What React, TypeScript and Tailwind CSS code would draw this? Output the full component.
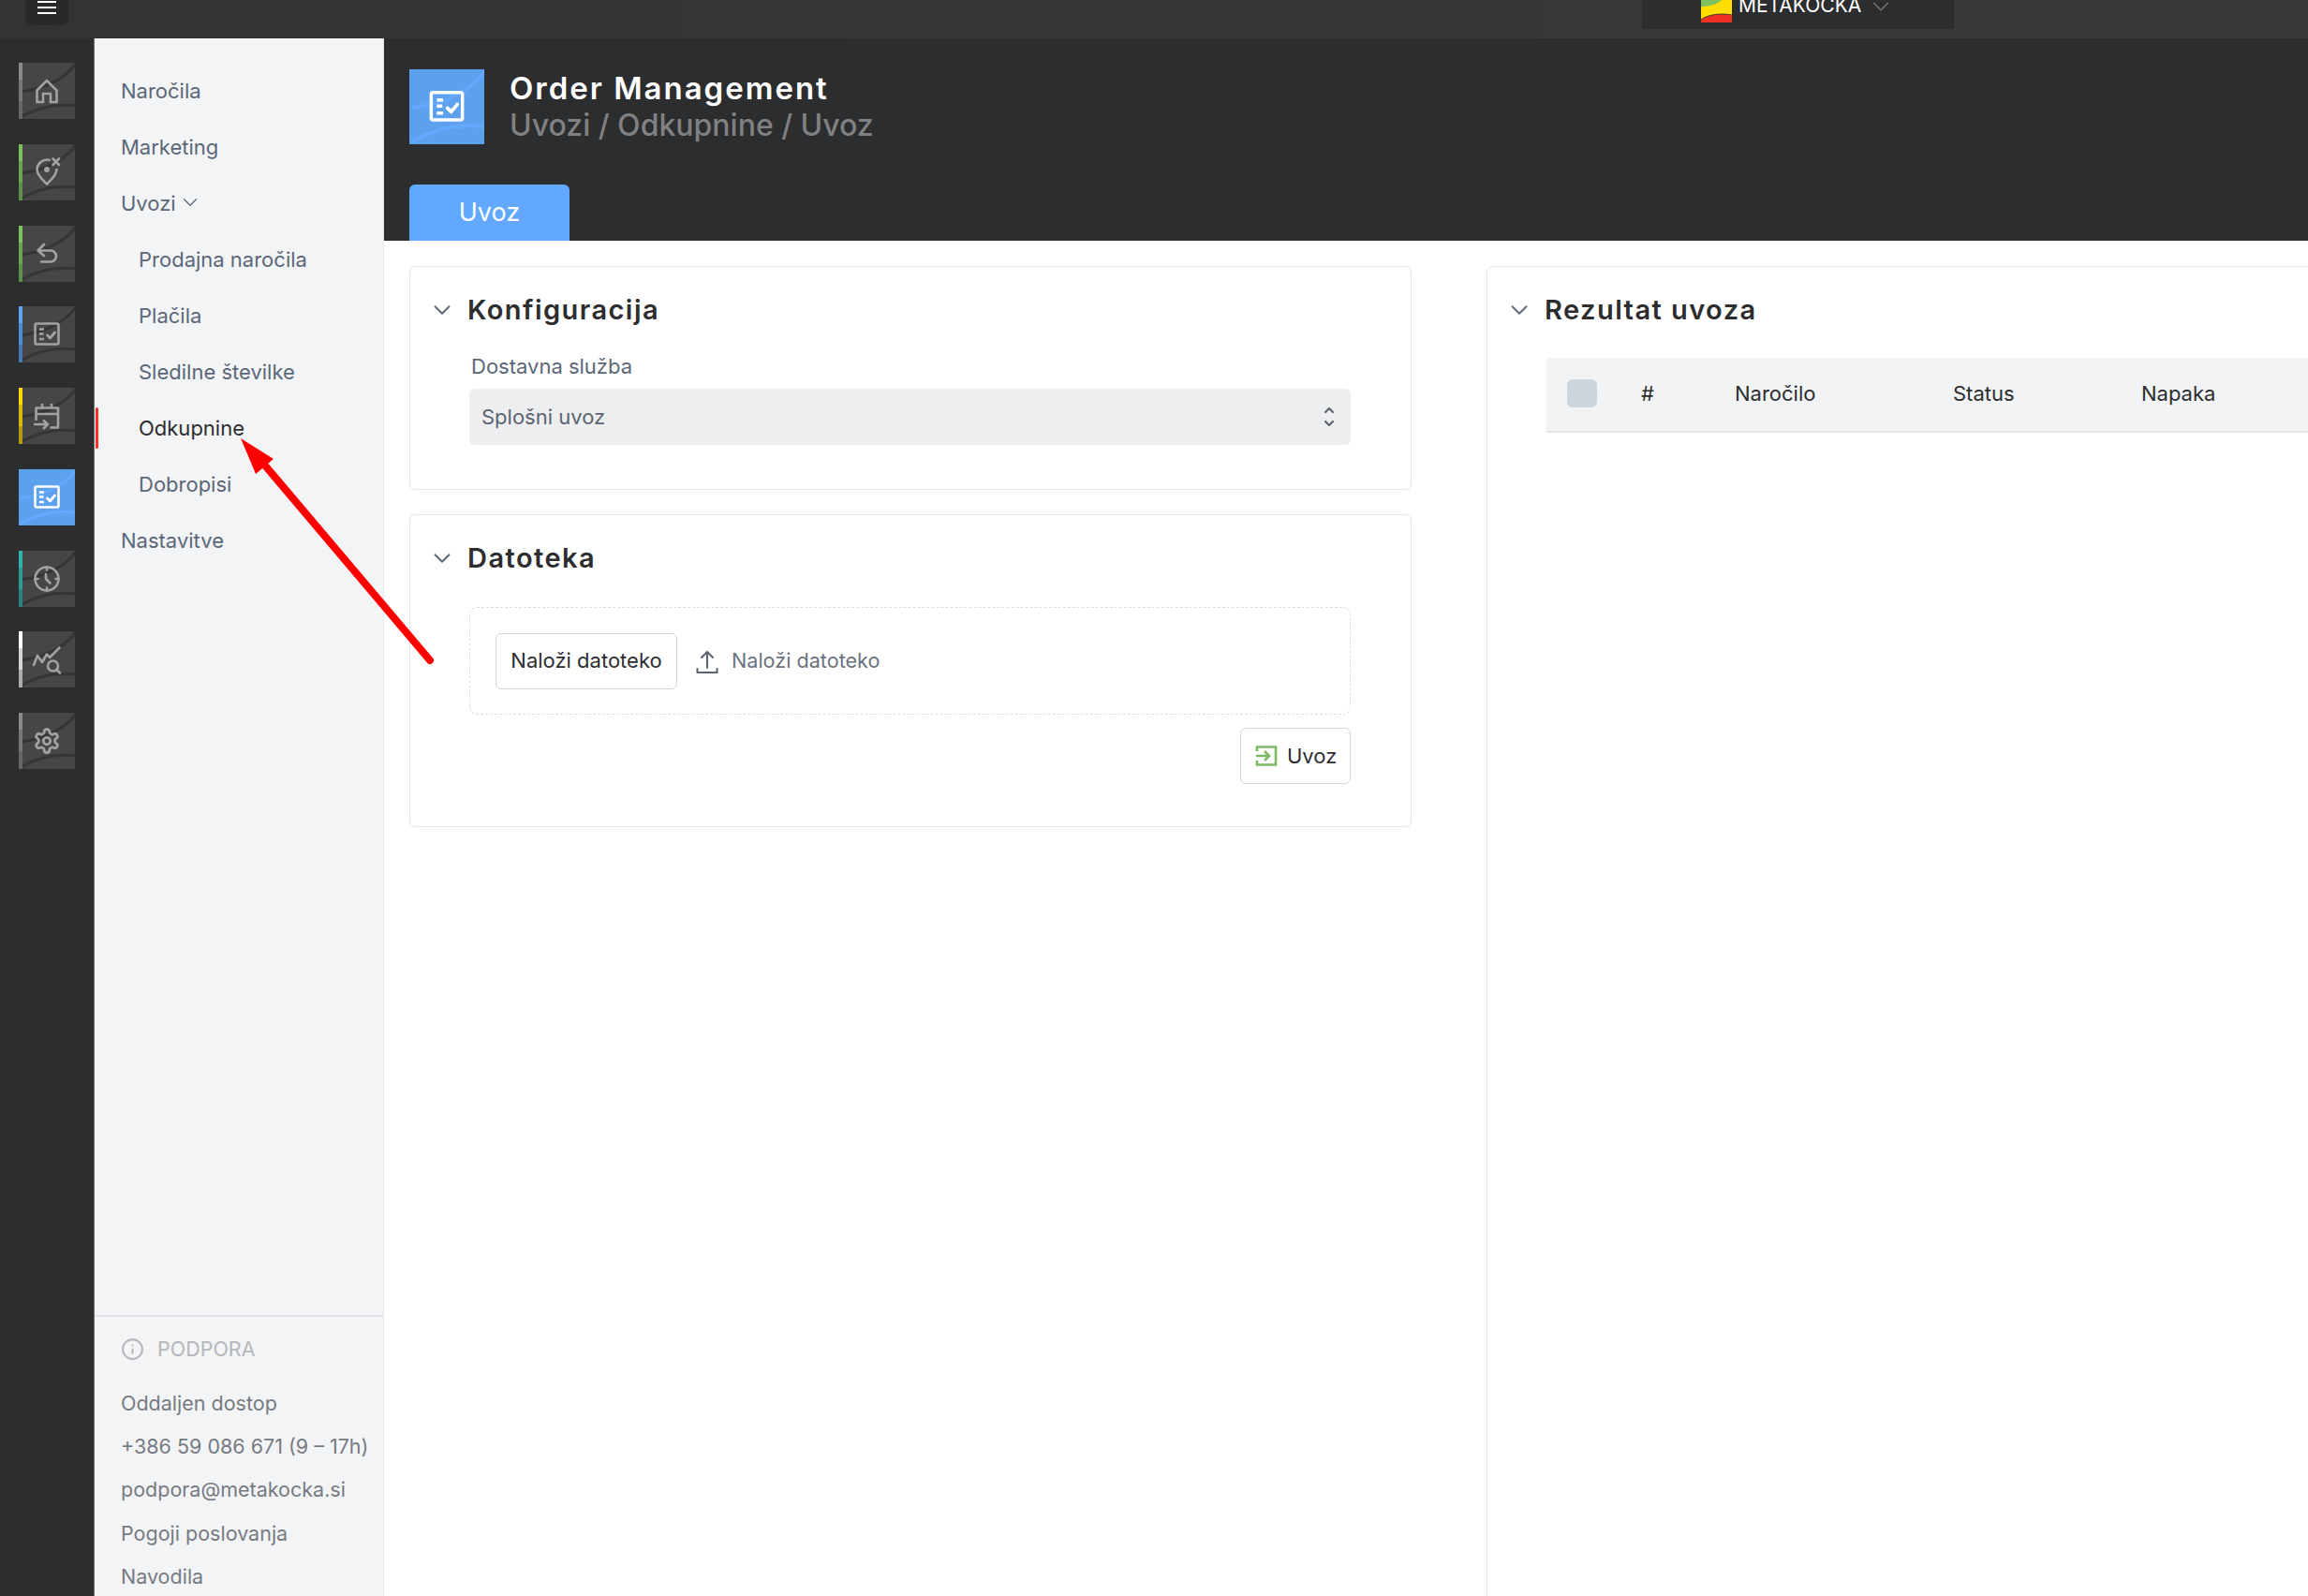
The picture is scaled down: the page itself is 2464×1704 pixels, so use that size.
import type { ReactNode } from "react";
import { ChevronDown, Info } from "lucide-react";

const navItems = [
  { label: "Naročila" },
  { label: "Marketing" },
  { label: "Uvozi", open: true },
  { label: "Prodajna naročila", sub: true },
  { label: "Plačila", sub: true },
  { label: "Sledilne številke", sub: true },
  { label: "Odkupnine", sub: true, active: true },
  { label: "Dobropisi", sub: true },
  { label: "Nastavitve" },
];

const supportLinks = [
  { label: "Oddaljen dostop", className: "h-[46px]" },
  { label: "+386 59 086 671 (9 – 17h)", className: "h-[46px]" },
  { label: "podpora@metakocka.si", className: "h-[47px]" },
  { label: "Pogoji poslovanja", className: "h-[46px]" },
  { label: "Navodila", className: "h-[46px]" },
];

function Tile({ strip, active, className, children }: { strip?: string[]; active?: boolean; className?: string; children: ReactNode }) {
  return (
    <svg viewBox="0 0 60 60" className={className ?? "w-[60px] h-[60px] shrink-0"}>
      <rect width="60" height="60" fill={active ? "#5ca0ee" : "#464646"} />
      <g fill="none" stroke={active ? "#64a9fd" : "#343536"} strokeWidth="3">
        <path d="M2 31 C 25 28, 47 20, 61 1" />
        <path d="M2 58 C 18 49, 38 43, 61 46" />
      </g>
      {strip && (
        <>
          <rect width="4" height="18" fill={strip[0]} />
          <rect y="18" width="4" height="23" fill={strip[1]} />
          <rect y="41" width="4" height="19" fill={strip[2]} />
        </>
      )}
      <g
        fill="none"
        stroke={active ? "#ffffff" : "#a2a2a2"}
        strokeWidth="2.6"
        strokeLinecap="round"
        strokeLinejoin="round"
      >
        {children}
      </g>
    </svg>
  );
}

function ChecklistGlyph() {
  return (
    <>
      <rect x="17.5" y="18.5" width="25" height="22" rx="1.5" />
      <path d="M22 24.5h5M22 29.5h4.5M22 35h5" strokeLinecap="butt" />
      <path d="M30.5 31l3 3 5-6" strokeWidth="2.8" />
    </>
  );
}

const railTiles = [
  {
    strip: ["#8b8b8b", "#777777", "#666666"],
    glyph: <path d="M19.5 29.5 30 19l10.5 10.5V42H34V33h-8v9h-6.5z" strokeLinecap="butt" strokeLinejoin="miter" />,
  },
  {
    strip: ["#7cc05f", "#6aa552", "#5c8f49"],
    glyph: (
      <>
        <path d="M32.5 16.7A11 11 0 0 0 19.5 27c0 6 6 11 10.5 15.5C34.5 38 40.5 33 40.5 27" />
        <circle cx="30" cy="27" r="1.6" fill="#a2a2a2" />
        <path d="M36.5 15.5l6.5 6.5M43 15.5 36.5 22" />
      </>
    ),
  },
  {
    strip: ["#7cc05f", "#6aa552", "#5c8f49"],
    glyph: <path d="M27 20l-6.5 6.5L27 32M20.5 26.5H34a6 6 0 0 1 0 12H24" />,
  },
  {
    strip: ["#5ea3f5", "#4f8cd6", "#4676b3"],
    glyph: <ChecklistGlyph />,
  },
  {
    strip: ["#ffd900", "#d9b90a", "#b39a0e"],
    glyph: (
      <path d="M18.5 35V21.5h23.5V42.5H33.5M18.5 28h23.5M25 17v5M35 17v5M16 39h14M26 34.5 31 39l-5 5" strokeLinecap="butt" />
    ),
  },
  { active: true, glyph: <ChecklistGlyph /> },
  {
    strip: ["#30b3ab", "#2d9a94", "#2b827e"],
    glyph: (
      <>
        <circle cx="30" cy="30" r="12.5" />
        <path d="M29 25v5l4.5 4.5M30 17.5v3M30 39.5v3M17.5 30h3M39.5 30h3" />
      </>
    ),
  },
  {
    strip: ["#ffffff", "#d5d5d5", "#acacac"],
    glyph: (
      <>
        <path d="M16 36l4-10 5 7 5-8.5 3 3.5 10.5-10.5" />
        <circle cx="36.5" cy="37" r="5.5" />
        <path d="M40.5 41l3.5 3.5" />
      </>
    ),
  },
  {
    strip: ["#8b8b8b", "#777777", "#666666"],
    glyph: (
      <g transform="translate(15 15) scale(1.25)" strokeWidth="2.2">
        <path d="M12.22 2h-.44a2 2 0 0 0-2 2v.18a2 2 0 0 1-1 1.73l-.43.25a2 2 0 0 1-2 0l-.15-.08a2 2 0 0 0-2.73.73l-.22.38a2 2 0 0 0 .73 2.73l.15.1a2 2 0 0 1 1 1.72v.51a2 2 0 0 1-1 1.74l-.15.09a2 2 0 0 0-.73 2.73l.22.38a2 2 0 0 0 2.73.73l.15-.08a2 2 0 0 1 2 0l.43.25a2 2 0 0 1 1 1.73V20a2 2 0 0 0 2 2h.44a2 2 0 0 0 2-2v-.18a2 2 0 0 1 1-1.73l.43-.25a2 2 0 0 1 2 0l.15.08a2 2 0 0 0 2.73-.73l.22-.39a2 2 0 0 0-.73-2.73l-.15-.08a2 2 0 0 1-1-1.74v-.5a2 2 0 0 1 1-1.74l.15-.09a2 2 0 0 0 .73-2.73l-.22-.38a2 2 0 0 0-2.73-.73l-.15.08a2 2 0 0 1-2 0l-.43-.25a2 2 0 0 1-1-1.73V4a2 2 0 0 0-2-2z" />
        <circle cx="12" cy="12" r="3" />
      </g>
    ),
  },
];

function TopBar() {
  return (
    <header className="h-[41px] shrink-0 flex bg-gradient-to-r from-[#323335] to-[#38393b] overflow-hidden">
      <div className="ml-[27px] w-[46px] h-[27px] rounded-b-lg bg-[#28292b] flex flex-col items-center gap-[4px] pt-[1px]">
        <span className="w-[20px] h-[2px] bg-white" />
        <span className="w-[20px] h-[2px] bg-white" />
        <span className="w-[20px] h-[2px] bg-white" />
      </div>
      <div className="ml-[1680px] w-[333px] h-[31px] bg-[#2c2d2f] flex items-start pl-[63px]">
        <svg viewBox="0 0 33 24" className="w-[33px] h-[24px]">
          <rect width="33" height="24" fill="#ffdd00" />
          <path d="M0 7C10 7 18 4 22 0H0z" fill="#7cc05f" />
          <path d="M0 24v-3c8-6 22-7 33-5v8z" fill="#f03024" />
          <path d="M0 21c8-6 22-7 33-5" fill="none" stroke="#3a3a2a" strokeWidth="1" />
        </svg>
        <span className="ml-[7px] -mt-[7px] h-[25px] leading-[25px] text-[21px] text-white">METAKOČKA</span>
        <ChevronDown className="ml-[6px] -mt-[8px] w-[30px] h-[30px] text-[#77787a]" strokeWidth={1.2} />
      </div>
    </header>
  );
}

function Rail() {
  return (
    <aside className="w-[101px] shrink-0 bg-[#2c2d2f] border-r border-[#6b6c6e] flex flex-col gap-[26.75px] pl-[20px] pt-[26px]">
      {railTiles.map((t, i) => (
        <Tile key={i} strip={t.strip} active={t.active}>
          {t.glyph}
        </Tile>
      ))}
    </aside>
  );
}

function Sidebar() {
  return (
    <aside className="w-[309px] shrink-0 bg-[#f3f4f6] border-r border-[#e5e7eb] flex flex-col text-[22px]">
      <nav className="pt-[26px] flex-1">
        {navItems.map((item) => (
          <div
            key={item.label}
            className={
              "relative h-[60px] flex items-center " +
              (item.sub ? "pl-[47px] " : "pl-[28px] ") +
              (item.active ? "text-[#2c2d2f]" : "text-[#5b6778]")
            }
          >
            {item.active && <span className="absolute left-[1px] top-[8px] w-[3px] h-[44px] rounded-sm bg-[#f5302a]" />}
            {item.label}
            {item.open && <ChevronDown className="ml-[2px] w-[26px] h-[26px] -mt-[2px]" strokeWidth={1.2} />}
          </div>
        ))}
      </nav>
      <div className="h-[300px] shrink-0 border-t-2 border-[#dfe1e5] ml-[1px] pl-[27px] text-[21.5px] text-[#767b82]">
        <div className="h-[69px] flex items-center text-[#b5b7ba]">
          <Info className="w-[25px] h-[25px]" strokeWidth={2} />
          <span className="ml-[14px]">PODPORA</span>
        </div>
        {supportLinks.map((l) => (
          <div key={l.label} className={"flex items-center whitespace-nowrap " + l.className}>
            {l.label}
          </div>
        ))}
      </div>
    </aside>
  );
}

function Card({ title, className, children }: { title: string; className?: string; children?: ReactNode }) {
  return (
    <section className={"rounded-md border border-[#e6e7ea] bg-white " + (className ?? "")}>
      <div className="h-[91px] flex items-center pl-[19px]">
        <ChevronDown className="w-[30px] h-[30px] text-[#5b6778]" strokeWidth={1.5} />
        <h2 className="ml-[12px] text-[29px] text-[#2c2d2f] font-semibold tracking-[0.05em]">{title}</h2>
      </div>
      <div className="pl-[63px] pr-[64px]">{children}</div>
    </section>
  );
}

function OutlineButton({ className, children }: { className?: string; children: ReactNode }) {
  return (
    <button className={"h-[60px] flex items-center rounded-md border border-[#d3d5d9] bg-white text-[22px] text-[#2c2d2f] " + (className ?? "")}>
      {children}
    </button>
  );
}

function ConfigCard() {
  return (
    <Card title="Konfiguracija" className="h-[239px]">
      <div className="h-[30px] pl-[2px] pt-[1px] flex items-center text-[22px] text-[#5b6778]">Dostavna služba</div>
      <div className="mt-[9px] h-[60px] rounded-md bg-[#edeef0] flex items-center justify-between pl-[13px] pr-[15px] text-[22px] text-[#5b6470]">
        Splošni uvoz
        <svg viewBox="0 0 16 28" className="w-[16px] h-[28px]" fill="none" stroke="#5b6470" strokeWidth="2.2" strokeLinecap="round" strokeLinejoin="round">
          <path d="M4 9l4-4 4 4M4 19l4 4 4-4" />
        </svg>
      </div>
    </Card>
  );
}

function FileCard() {
  return (
    <Card title="Datoteka" className="h-[334px]">
      <div className="mt-[7px] h-[115px] rounded-lg border border-dashed border-[#dcdee1] flex items-center pl-[27px]">
        <OutlineButton className="w-[194px] justify-center">Naloži datoteko</OutlineButton>
        <svg viewBox="0 0 24 28" className="ml-[20px] w-[24px] h-[28px]" fill="none" stroke="#5b6470" strokeWidth="2" strokeLinecap="round">
          <path d="M12 21V4M6 10l6-6 6 6M1.5 22v4h21v-4" />
        </svg>
        <span className="ml-[14px] text-[21.6px] text-[#6b7280]">Naloži datoteko</span>
      </div>
      <div className="mt-[14px] flex justify-end">
        <OutlineButton className="w-[118px] pl-[15px]">
          <svg viewBox="0 0 24 24" className="w-[24px] h-[24px]" fill="none" stroke="#7cbb63" strokeWidth="2.6">
            <path d="M2 7V2.5h20v19H2V17M1 12h13M10 7l5 5-5 5" />
          </svg>
          <span className="ml-[10px]">Uvoz</span>
        </OutlineButton>
      </div>
    </Card>
  );
}

function ResultCard() {
  return (
    <Card title="Rezultat uvoza" className="w-[1000px] shrink-0 h-[1440px]">
      <div className="mt-[6px] -mr-[64px] h-[80px] bg-[#f1f3f5] border-b-2 border-[#e2e4e7] flex items-center pb-[2px] text-[22px] text-[#2c2d2f]">
        <div className="w-[101px] pl-[22px]">
          <div className="w-[32px] h-[30px] rounded-md bg-[#cdd5dd]" />
        </div>
        <div className="w-[100px]">#</div>
        <div className="w-[233px]">Naročilo</div>
        <div className="w-[201px]">Status</div>
        <div>Napaka</div>
      </div>
    </Card>
  );
}

function Main() {
  return (
    <main className="flex-1 min-w-0 overflow-hidden bg-white flex flex-col">
      <div className="h-[216px] shrink-0 bg-[#2c2d2f] px-[27px] pt-[33px] flex flex-col">
        <div className="flex">
          <Tile active className="w-[80px] h-[80px] shrink-0">
            <ChecklistGlyph />
          </Tile>
          <div className="ml-[27px]">
            <h1 className="h-[40px] leading-[40px] text-[33px] text-white font-semibold tracking-[0.06em]">Order Management</h1>
            <div className="h-[40px] leading-[40px] text-[32px] text-[#808183] font-medium">Uvozi / Odkupnine / Uvoz</div>
          </div>
        </div>
        <div className="mt-auto w-[171px] h-[60px] rounded-t-md bg-[#62a8ff] flex items-center justify-center pt-[1px] text-[27px] text-white">
          Uvoz
        </div>
      </div>
      <div className="flex gap-[80px] pl-[27px] pt-[27px]">
        <div className="w-[1070px] shrink-0 flex flex-col gap-[26px]">
          <ConfigCard />
          <FileCard />
        </div>
        <ResultCard />
      </div>
    </main>
  );
}

export default function App() {
  return (
    <div className="relative w-[2464px] h-[1704px] overflow-hidden flex flex-col bg-white font-['Inter',sans-serif]">
      <TopBar />
      <div className="flex-1 min-h-0 flex">
        <Rail />
        <Sidebar />
        <Main />
      </div>
      {/* annotation arrow drawn over the screenshot */}
      <svg className="absolute left-0 top-0 w-[2464px] h-[1704px] pointer-events-none" viewBox="0 0 2464 1704">
        <path d="M283 497 459 705" stroke="#ff0000" strokeWidth="8" strokeLinecap="round" />
        <path d="M257 468 292 490 273 506z" fill="#ff0000" />
      </svg>
    </div>
  );
}
